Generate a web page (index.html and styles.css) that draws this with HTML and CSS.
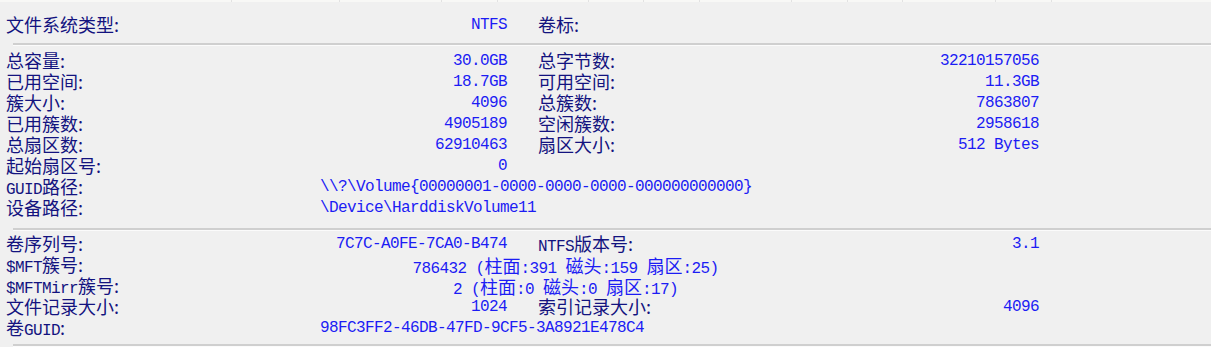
FILE: index.html
```html
<!DOCTYPE html>
<html lang="zh-CN">
<head>
<meta charset="utf-8">
<title>NTFS 卷信息</title>
<link rel="stylesheet" href="styles.css">
</head>
<body>
<div class="strip">
  <span class="c w232"></span><span class="c w108"></span><span class="c w102"></span><span class="c w56"></span><span class="c w91"></span><span class="c w55"></span><span class="c w56"></span><span class="c w92"></span><span class="c w56"></span><span class="c w55"></span><span class="c w93"></span><span class="c w56"></span><span class="c rest"></span>
</div>

<section class="grid s1">
  <div class="lab">文件系统类型:</div><div class="val">NTFS</div><div class="lab2">卷标:</div><div class="val2"></div>
</section>
<div class="sep"></div>

<section class="grid s2">
  <div class="lab">总容量:</div><div class="val">30.0GB</div><div class="lab2">总字节数:</div><div class="val2">32210157056</div>
  <div class="lab">已用空间:</div><div class="val">18.7GB</div><div class="lab2">可用空间:</div><div class="val2">11.3GB</div>
  <div class="lab">簇大小:</div><div class="val">4096</div><div class="lab2">总簇数:</div><div class="val2">7863807</div>
  <div class="lab">已用簇数:</div><div class="val">4905189</div><div class="lab2">空闲簇数:</div><div class="val2">2958618</div>
  <div class="lab">总扇区数:</div><div class="val">62910463</div><div class="lab2">扇区大小:</div><div class="val2">512 Bytes</div>
  <div class="lab">起始扇区号:</div><div class="val">0</div>
  <div class="lab"><span class="lat">GUID</span>路径:</div><div class="val span-l">\\?\Volume{00000001-0000-0000-0000-000000000000}</div>
  <div class="lab">设备路径:</div><div class="val span-l">\Device\HarddiskVolume11</div>
</section>
<div class="sep"></div>

<section class="grid s3">
  <div class="lab">卷序列号:</div><div class="val">7C7C-A0FE-7CA0-B474</div><div class="lab2"><span class="lat">NTFS</span>版本号:</div><div class="val2">3.1</div>
  <div class="lab"><span class="lat">$MFT</span>簇号:</div><div class="val span-c">786432 (<span class="cjk">柱面</span>:391 <span class="cjk">磁头</span>:159 <span class="cjk">扇区</span>:25)</div>
  <div class="lab"><span class="lat">$MFTMirr</span>簇号:</div><div class="val span-c">2 (<span class="cjk">柱面</span>:0 <span class="cjk">磁头</span>:0 <span class="cjk">扇区</span>:17)</div>
  <div class="lab">文件记录大小:</div><div class="val">1024</div><div class="lab2">索引记录大小:</div><div class="val2">4096</div>
  <div class="lab">卷<span class="lat">GUID</span>:</div><div class="val span-l">98FC3FF2-46DB-47FD-9CF5-3A8921E478C4</div>
</section>
<div class="sep"></div>
</body>
</html>
```

FILE: styles.css
```css
html, body {
  margin: 0;
  padding: 0;
}

body {
  width: 1211px;
  height: 347px;
  overflow: hidden;
  background: #f0f0f0;
  font-family: "Noto Sans CJK SC", "Liberation Sans", sans-serif;
}

.strip {
  display: flex;
  height: 2px;
  background: #f8f8f6;
}

.strip .c {
  display: block;
  height: 2px;
  border-right: 1px solid #e2e2e2;
  box-sizing: border-box;
}

.w232 { width: 232px; }
.w108 { width: 108px; }
.w102 { width: 102px; }
.w56 { width: 56px; }
.w91 { width: 91px; }
.w55 { width: 55px; }
.w92 { width: 92px; }
.w93 { width: 93px; }
.strip .rest { flex: 1; border-right: none; }

.grid {
  display: grid;
  grid-template-columns: 314px 187px 31px 272px 229px 1fr;
  grid-auto-rows: 21px;
  grid-auto-flow: row;
  padding-left: 6px;
  line-height: 21px;
}

.s1 {
  padding-top: 12px;
  padding-bottom: 8px;
}

.s2 {
  padding-top: 4px;
  padding-bottom: 10px;
}

.s3 {
  padding-top: 2px;
  padding-bottom: 6px;
}

.lab,
.lab2 {
  font-size: 18px;
  color: #13137f;
  white-space: nowrap;
}

.lab { grid-column: 1; }
.lab2 { grid-column: 4; }

.lat {
  font-family: "Liberation Mono", monospace;
  font-size: 16px;
  letter-spacing: -0.6px;
}

.val,
.val2 {
  font-family: "Liberation Mono", "Noto Sans CJK SC", monospace;
  font-size: 16px;
  letter-spacing: -0.6px;
  color: #1c1cf4;
  text-align: right;
  white-space: nowrap;
  padding-top: 1px;
}

.val { grid-column: 2; }
.val2 { grid-column: 5; }

.val.span-l {
  grid-column: 2 / 6;
  text-align: left;
}

.val.span-c {
  grid-column: 2 / 5;
  text-align: center;
  padding-left: 1px;
}

.cjk {
  font-family: "Noto Sans CJK SC", sans-serif;
  font-size: 18px;
  letter-spacing: 0;
}

.sep {
  margin-left: 13px;
  height: 2px;
  background: #cfcfcf;
  border-bottom: 1px solid #fbfbfb;
}
```
